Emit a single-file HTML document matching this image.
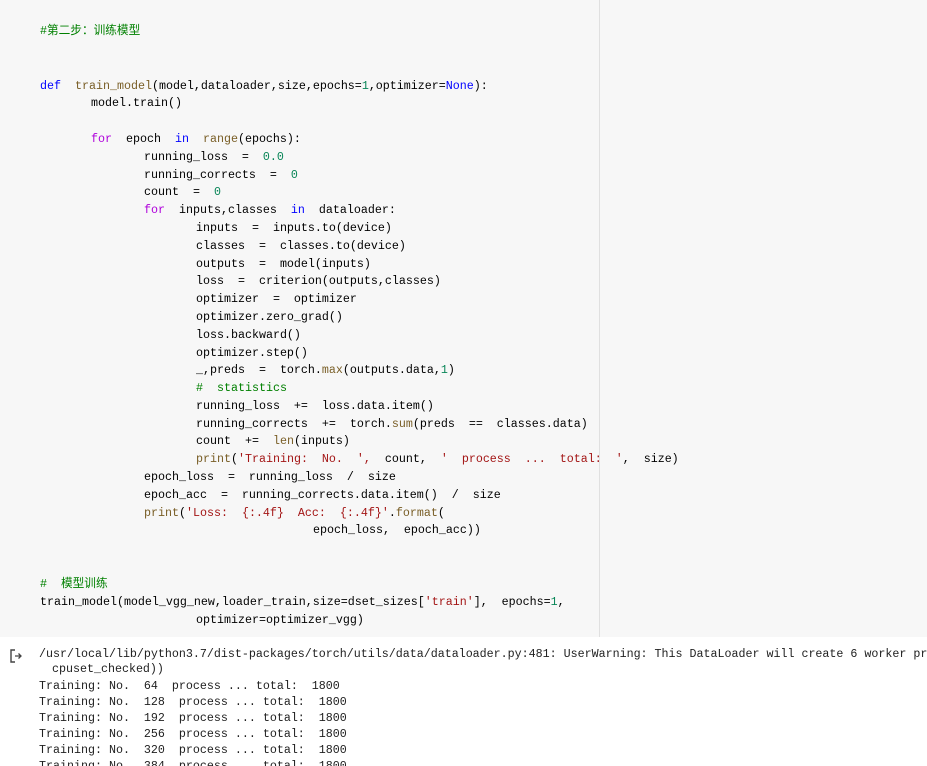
<!DOCTYPE html>
<html><head><meta charset="utf-8"><style>
html,body{margin:0;width:927px;height:766px;overflow:hidden}
body{position:relative;background:#fff;font-family:"Liberation Mono","Noto Sans CJK SC",monospace;font-size:11.67px;color:#000}
.cell{position:absolute;left:0;top:0;width:927px;height:637px;background:#f7f7f7}
.vl{position:absolute;left:599px;top:0;width:1px;height:637px;background:#e0e0e0}
.l{position:absolute;white-space:pre;line-height:16px;right:0;overflow:hidden}
.k{color:#0000ff}.f{color:#795e26}.p{color:#af00db}.n{color:#098658}.s{color:#a31515}.c{color:#008000}
.o{position:absolute;left:39px;right:0;overflow:hidden;white-space:pre;line-height:16px;color:#212121}
</style></head><body>
<div class="cell"></div><div class="vl"></div>
<div class="l c" style="left:40px;top:23px">#第二步：训练模型</div>
<div class="l" style="left:40px;top:78px"><span class="k">def</span>  <span class="f">train_model</span>(model,dataloader,size,epochs=<span class="n">1</span>,optimizer=<span class="k">None</span>):</div>
<div class="l" style="left:91px;top:95px">model.train()</div>
<div class="l" style="left:91px;top:131px"><span class="p">for</span>  epoch  <span class="k">in</span>  <span class="f">range</span>(epochs):</div>
<div class="l" style="left:144px;top:149px">running_loss  =  <span class="n">0.0</span></div>
<div class="l" style="left:144px;top:167px">running_corrects  =  <span class="n">0</span></div>
<div class="l" style="left:144px;top:184px">count  =  <span class="n">0</span></div>
<div class="l" style="left:144px;top:202px"><span class="p">for</span>  inputs,classes  <span class="k">in</span>  dataloader:</div>
<div class="l" style="left:196px;top:220px">inputs  =  inputs.to(device)</div>
<div class="l" style="left:196px;top:238px">classes  =  classes.to(device)</div>
<div class="l" style="left:196px;top:256px">outputs  =  model(inputs)</div>
<div class="l" style="left:196px;top:273px">loss  =  criterion(outputs,classes)</div>
<div class="l" style="left:196px;top:291px">optimizer  =  optimizer</div>
<div class="l" style="left:196px;top:309px">optimizer.zero_grad()</div>
<div class="l" style="left:196px;top:327px">loss.backward()</div>
<div class="l" style="left:196px;top:345px">optimizer.step()</div>
<div class="l" style="left:196px;top:362px">_,preds  =  torch.<span class="f">max</span>(outputs.data,<span class="n">1</span>)</div>
<div class="l c" style="left:196px;top:380px">#  statistics</div>
<div class="l" style="left:196px;top:398px">running_loss  +=  loss.data.item()</div>
<div class="l" style="left:196px;top:416px">running_corrects  +=  torch.<span class="f">sum</span>(preds  ==  classes.data)</div>
<div class="l" style="left:196px;top:433px">count  +=  <span class="f">len</span>(inputs)</div>
<div class="l" style="left:196px;top:451px"><span class="f">print</span>(<span class="s">'Training:  No.  ',</span>  count,  <span class="s">'  process  ...  total:  '</span>,  size)</div>
<div class="l" style="left:144px;top:469px">epoch_loss  =  running_loss  /  size</div>
<div class="l" style="left:144px;top:487px">epoch_acc  =  running_corrects.data.item()  /  size</div>
<div class="l" style="left:144px;top:505px"><span class="f">print</span>(<span class="s">'Loss:  {:.4f}  Acc:  {:.4f}'</span>.<span class="f">format</span>(</div>
<div class="l" style="left:313px;top:522px">epoch_loss,  epoch_acc))</div>
<div class="l c" style="left:40px;top:576px">#  模型训练</div>
<div class="l" style="left:40px;top:594px">train_model(model_vgg_new,loader_train,size=dset_sizes[<span class="s">'train'</span>],  epochs=<span class="n">1</span>,</div>
<div class="l" style="left:196px;top:612px">optimizer=optimizer_vgg)</div>
<svg style="position:absolute;left:9px;top:649px" width="14" height="14" viewBox="0 0 14 14"><path d="M6 1H2v12h4" fill="none" stroke="#444" stroke-width="1.4"/><path d="M6 7h6M9.5 4.5L12 7l-2.5 2.5" fill="none" stroke="#444" stroke-width="1.3"/></svg>
<div class="o" style="top:646px">/usr/local/lib/python3.7/dist-packages/torch/utils/data/dataloader.py:481: UserWarning: This DataLoader will create 6 worker pr</div>
<div class="o" style="top:661px;left:52px">cpuset_checked))</div>
<div class="o" style="top:678px">Training: No.  64  process ... total:  1800</div>
<div class="o" style="top:694px">Training: No.  128  process ... total:  1800</div>
<div class="o" style="top:710px">Training: No.  192  process ... total:  1800</div>
<div class="o" style="top:726px">Training: No.  256  process ... total:  1800</div>
<div class="o" style="top:742px">Training: No.  320  process ... total:  1800</div>
<div class="o" style="top:758px">Training: No.  384  process ... total:  1800</div>
</body></html>
